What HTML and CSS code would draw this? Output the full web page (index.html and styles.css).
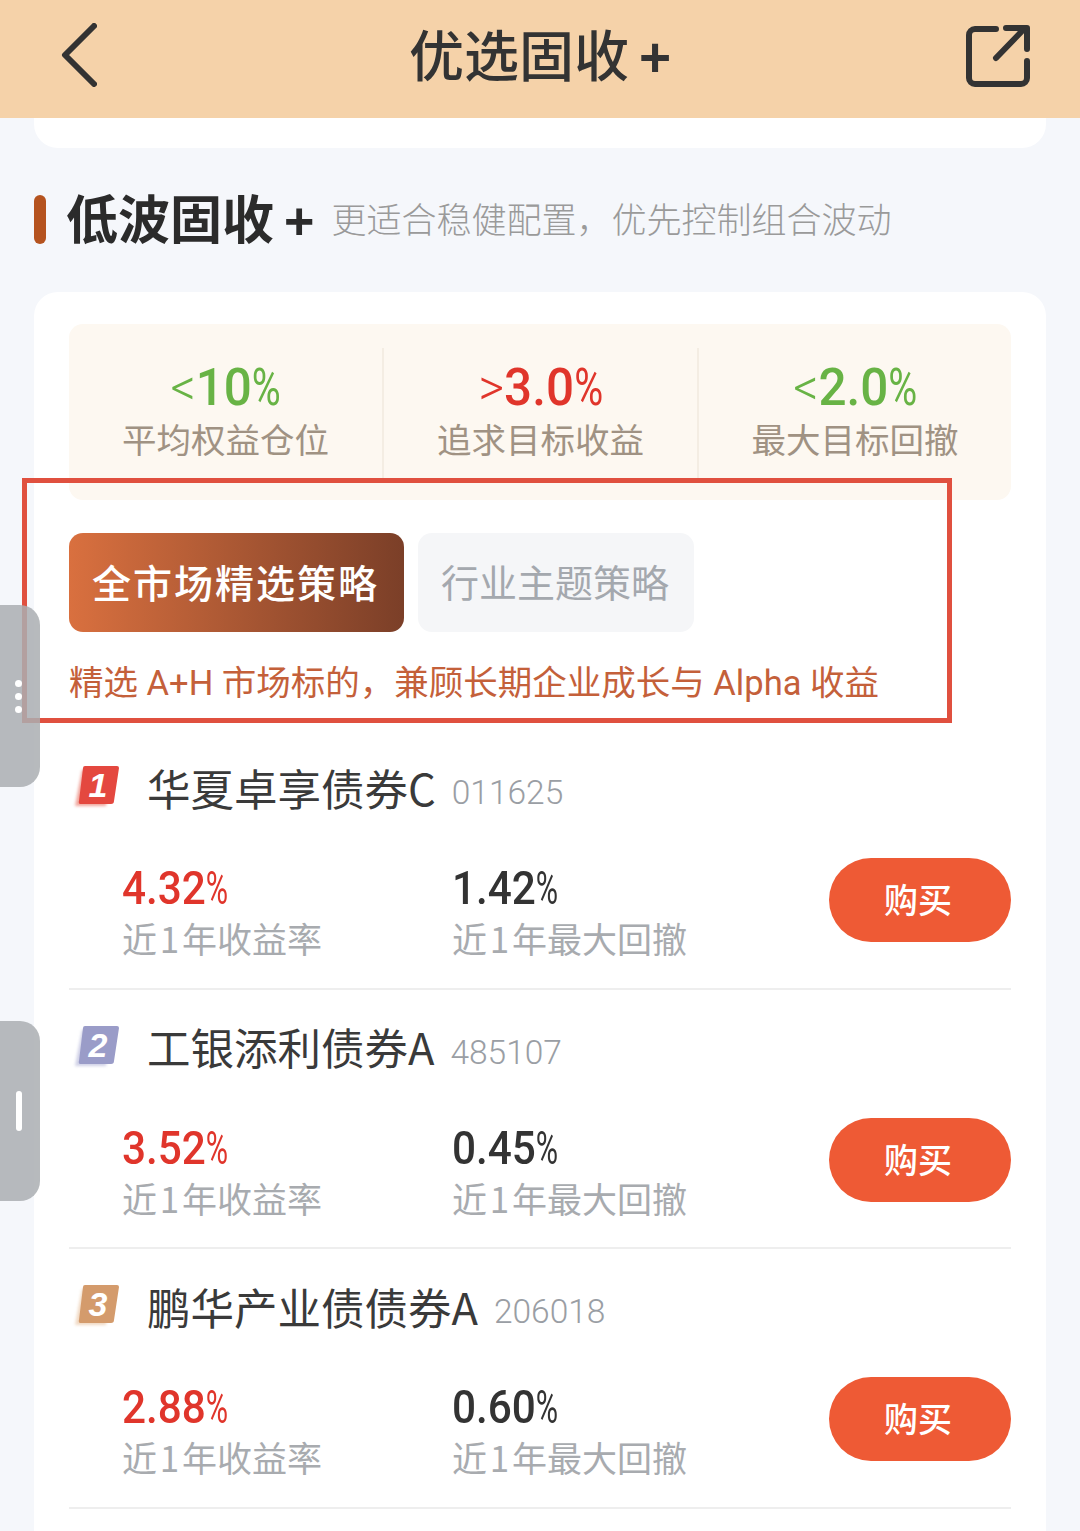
FILE: index.html
```html
<!DOCTYPE html>
<html lang="zh-CN">
<head>
<meta charset="UTF-8">
<meta name="viewport" content="width=device-width, initial-scale=1.0">
<title>优选固收+</title>
<link rel="stylesheet" href="styles.css">
</head>
<body>
<div class="page">
    <header class="topbar">
        <svg class="back-icon" width="36" height="64" viewBox="0 0 36 64"><polyline points="33,3 4,32 33,61" fill="none" stroke="#333" stroke-width="6" stroke-linecap="round" stroke-linejoin="round"/></svg>
        <h1 class="page-title">优选固收<span class="plus">+</span></h1>
        <svg class="share-icon" width="64" height="64" viewBox="0 0 64 64"><path d="M30 6H9a6 6 0 0 0-6 6v43a6 6 0 0 0 6 6h46a6 6 0 0 0 6-6V38" fill="none" stroke="#333" stroke-width="6" stroke-linecap="round"/><path d="M30 35L58 6M40 5h21v21" fill="none" stroke="#333" stroke-width="6" stroke-linecap="round" stroke-linejoin="round"/></svg>
    </header>
    <div class="prev-card"></div>

    <section class="section-head">
        <span class="section-mark"></span>
        <h2 class="section-title">低波固收<span class="plus">+</span></h2>
        <span class="section-sub">更适合稳健配置，优先控制组合波动</span>
    </section>

    <section class="card">
        <div class="stats">
            <div class="stat">
                <div class="stat-value green"><span class="sign">&lt;</span>10<span class="pct">%</span></div>
                <div class="stat-label">平均权益仓位</div>
            </div>
            <div class="stat">
                <div class="stat-value red"><span class="sign">&gt;</span>3.0<span class="pct">%</span></div>
                <div class="stat-label">追求目标收益</div>
            </div>
            <div class="stat">
                <div class="stat-value green"><span class="sign">&lt;</span>2.0<span class="pct">%</span></div>
                <div class="stat-label">最大目标回撤</div>
            </div>
        </div>

        <div class="tabs">
            <div class="tab tab-active">全市场精选策略</div>
            <div class="tab">行业主题策略</div>
        </div>
        <p class="tab-desc">精选 A+H 市场标的，兼顾长期企业成长与 Alpha 收益</p>

        <div class="fund">
            <div class="fund-head">
                <svg class="rank" width="50" height="46" viewBox="0 0 50 46"><path class="rank-ghost" d="M10 6h30l-6 36H3z" fill="#f0a59c"/><path d="M13 2h32a2 2 0 0 1 2 2l-5 33a3 3 0 0 1-3 3H9a2 2 0 0 1-2-3l4-33a2 2 0 0 1 2-2z" fill="#e4483f"/><text class="rank-num" x="26" y="33">1</text></svg>
                <span class="fund-name">华夏卓享债券C</span>
                <span class="fund-code">011625</span>
            </div>
            <div class="fund-body">
                <div class="metric metric-first">
                    <div class="metric-value red">4.32<span class="pct">%</span></div>
                    <div class="metric-label">近 1 年收益率</div>
                </div>
                <div class="metric">
                    <div class="metric-value">1.42<span class="pct">%</span></div>
                    <div class="metric-label">近 1 年最大回撤</div>
                </div>
                <div class="buy">购买</div>
            </div>
        </div>

        <div class="fund">
            <div class="fund-head">
                <svg class="rank" width="50" height="46" viewBox="0 0 50 46"><path class="rank-ghost" d="M10 6h30l-6 36H3z" fill="#cfd0e6"/><path d="M13 2h32a2 2 0 0 1 2 2l-5 33a3 3 0 0 1-3 3H9a2 2 0 0 1-2-3l4-33a2 2 0 0 1 2-2z" fill="#9a9cc8"/><text class="rank-num" x="26" y="33">2</text></svg>
                <span class="fund-name">工银添利债券A</span>
                <span class="fund-code">485107</span>
            </div>
            <div class="fund-body">
                <div class="metric metric-first">
                    <div class="metric-value red">3.52<span class="pct">%</span></div>
                    <div class="metric-label">近 1 年收益率</div>
                </div>
                <div class="metric">
                    <div class="metric-value">0.45<span class="pct">%</span></div>
                    <div class="metric-label">近 1 年最大回撤</div>
                </div>
                <div class="buy">购买</div>
            </div>
        </div>

        <div class="fund">
            <div class="fund-head">
                <svg class="rank" width="50" height="46" viewBox="0 0 50 46"><path class="rank-ghost" d="M10 6h30l-6 36H3z" fill="#f0d8c2"/><path d="M13 2h32a2 2 0 0 1 2 2l-5 33a3 3 0 0 1-3 3H9a2 2 0 0 1-2-3l4-33a2 2 0 0 1 2-2z" fill="#d49b6c"/><text class="rank-num" x="26" y="33">3</text></svg>
                <span class="fund-name">鹏华产业债债券A</span>
                <span class="fund-code">206018</span>
            </div>
            <div class="fund-body">
                <div class="metric metric-first">
                    <div class="metric-value red">2.88<span class="pct">%</span></div>
                    <div class="metric-label">近 1 年收益率</div>
                </div>
                <div class="metric">
                    <div class="metric-value">0.60<span class="pct">%</span></div>
                    <div class="metric-label">近 1 年最大回撤</div>
                </div>
                <div class="buy">购买</div>
            </div>
        </div>
    </section>

    <div class="red-box"></div>
    <div class="side-handle handle-dots"><span></span><span></span><span></span></div>
    <div class="side-handle handle-bar"><span></span></div>
</div>
</body>
</html>
```

FILE: styles.css
```css
* {
    box-sizing: border-box;
}
body {
    margin: 0;
    font-family: "Noto Sans CJK SC", "Liberation Sans", sans-serif;
}
.page {
    position: relative;
    width: 1080px;
    height: 1531px;
    overflow: hidden;
    background: #f5f7fb;
    color: #333;
}
.topbar {
    display: flex;
    align-items: center;
    justify-content: space-between;
    height: 118px;
    padding: 0 50px 9px 61px;
    background: #f5d2a9;
}
.page-title {
    margin: 0 0 0 17px;
    font-size: 55px;
    font-weight: 500;
    line-height: 70px;
    color: #333;
}
.plus {
    margin-left: 10px;
    font-family: "Liberation Sans", sans-serif;
    font-weight: 700;
}
.prev-card {
    height: 30px;
    margin: 0 34px;
    background: #fff;
    border-radius: 0 0 24px 24px;
}
.section-head {
    display: flex;
    align-items: center;
    height: 50px;
    margin: 46px 0 48px 34px;
}
.section-mark {
    width: 12px;
    height: 49px;
    margin-right: 20px;
    background: #b5531f;
    border-radius: 6px;
}
.section-title {
    margin: 0;
    font-size: 52px;
    font-weight: 700;
    line-height: 60px;
    color: #2b2b2b;
}
.section-title .plus {
    margin-left: 10px;
}
.section-sub {
    margin: -4px 0 0 17px;
    font-size: 35px;
    font-weight: 300;
    color: #9a9a9a;
}
.card {
    height: 1300px;
    margin: 0 34px;
    padding: 32px 35px 0;
    background: #fff;
    border-radius: 24px 24px 0 0;
}
.stats {
    display: grid;
    grid-template-columns: 313px 315px 314px;
    height: 176px;
    padding-top: 24px;
    background: #fdf8f1;
    border-radius: 14px;
}
.stat {
    height: 132px;
    text-align: center;
    border-left: 2px solid #f4ede3;
}
.stat:first-child {
    border-left: 0;
}
.stat-value {
    height: 46px;
    margin-top: 17px;
    font-family: "Roboto", sans-serif;
    font-size: 52px;
    font-weight: 500;
    line-height: 46px;
    white-space: nowrap;
    transform: scaleX(0.95);
}
.sign {
    font-weight: 300;
}
.stat-value .pct {
    margin-right: -8px;
    transform: scaleX(0.8);
}
.stat-label {
    margin-top: 3px;
    font-size: 34.5px;
    font-weight: 400;
    line-height: 48px;
    color: #a09283;
}
.green {
    color: #68b345;
}
.red {
    color: #e0352b;
}
.pct {
    display: inline-block;
    font-weight: 400;
    transform: scaleX(0.72);
    transform-origin: left center;
}
.tabs {
    display: flex;
    gap: 14px;
    margin-top: 33px;
}
.tab {
    width: 276px;
    height: 99px;
    padding-left: 23px;
    font-size: 38px;
    font-weight: 400;
    line-height: 96px;
    white-space: nowrap;
    color: #a4a8ae;
    background: #f5f6f8;
    border-radius: 14px;
}
.tab-active {
    width: 335px;
    font-size: 39px;
    font-weight: 500;
    letter-spacing: 2px;
    color: #fff;
    background: linear-gradient(90deg, #d9703f, #7b3f28);
}
.tab-desc {
    height: 48px;
    margin: 27px 0 23px;
    font-family: "Roboto", "Noto Sans CJK SC", sans-serif;
    font-size: 34.5px;
    font-weight: 400;
    line-height: 48px;
    white-space: nowrap;
    color: #c4603a;
}
.fund {
    height: 259.5px;
    padding-top: 29px;
    border-bottom: 2px solid #eeeeee;
}
.fund-head {
    display: flex;
    align-items: center;
    height: 60px;
}
.rank {
    flex: none;
    margin: -4px 25px 0 3px;
}
.rank-ghost {
    filter: blur(1.5px);
}
.rank-num {
    font-family: "Liberation Sans", sans-serif;
    font-size: 34px;
    font-weight: 700;
    font-style: italic;
    text-anchor: middle;
    fill: #fff;
}
.fund-name {
    margin-bottom: 4px;
    font-size: 43.5px;
    font-weight: 400;
    color: #3a3a3a;
}
.fund-code {
    margin: 7px 0 0 16px;
    font-family: "Roboto", sans-serif;
    font-size: 33.5px;
    font-weight: 300;
    color: #9a9ea4;
}
.fund-body {
    display: flex;
    align-items: flex-start;
    margin-top: 44px;
}
.metric {
    width: 377px;
}
.metric-first {
    width: 330px;
    margin-left: 53px;
}
.metric-value {
    height: 50px;
    font-family: "Roboto", sans-serif;
    font-size: 47px;
    font-weight: 500;
    line-height: 50px;
    white-space: nowrap;
    transform: scaleX(0.9);
    transform-origin: left center;
}
.metric-label {
    margin-top: 1px;
    font-size: 35px;
    font-weight: 400;
    line-height: 48px;
    white-space: nowrap;
    word-spacing: -5px;
    color: #a8abaf;
}
.buy {
    flex: none;
    width: 182px;
    height: 84px;
    margin-top: -5px;
    padding-right: 4px;
    font-size: 34px;
    font-weight: 500;
    line-height: 82px;
    text-align: center;
    color: #fff;
    background: #ee5a35;
    border-radius: 42px;
}

/* stuff lying over the page */
.red-box {
    position: absolute;
    left: 22px;
    top: 478px;
    width: 930px;
    height: 245px;
    border: 5px solid #e0503f;
}
.side-handle {
    position: absolute;
    left: 0;
    width: 40px;
    display: flex;
    flex-direction: column;
    align-items: center;
    justify-content: center;
    padding-right: 3px;
    background: rgba(170, 174, 178, 0.85);
    border-radius: 0 20px 20px 0;
}
.handle-dots {
    top: 605px;
    height: 182px;
    gap: 6px;
}
.handle-dots span {
    width: 7px;
    height: 7px;
    background: #fff;
    border-radius: 50%;
}
.handle-bar {
    top: 1021px;
    height: 180px;
}
.handle-bar span {
    width: 6px;
    height: 40px;
    background: #fff;
    border-radius: 3px;
}
```
